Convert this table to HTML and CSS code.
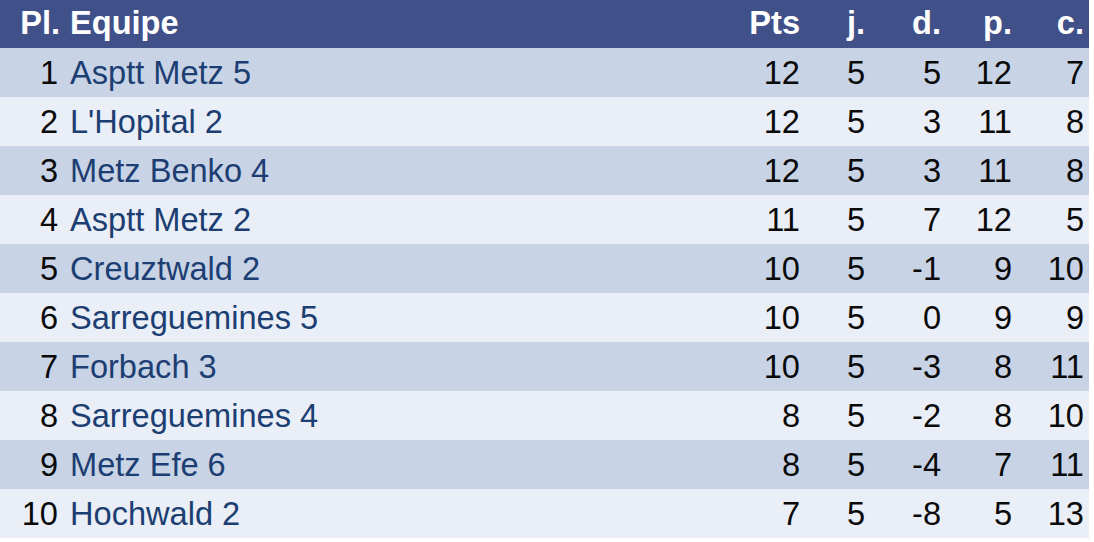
FILE: index.html
```html
<!DOCTYPE html>
<html>
<head>
<meta charset="utf-8">
<link rel="stylesheet" href="styles.css">
</head>
<body>
<table class="standings">
  <colgroup>
    <col class="c-pl"><col class="c-team"><col class="c-pts"><col class="c-j"><col class="c-d"><col class="c-p"><col class="c-c">
  </colgroup>
  <thead>
    <tr><th class="pl">Pl.</th><th class="team">Equipe</th><th>Pts</th><th>j.</th><th>d.</th><th>p.</th><th>c.</th></tr>
  </thead>
  <tbody>
    <tr><td class="pl">1</td><td class="team">Asptt Metz 5</td><td>12</td><td>5</td><td>5</td><td>12</td><td>7</td></tr>
    <tr><td class="pl">2</td><td class="team">L'Hopital 2</td><td>12</td><td>5</td><td>3</td><td>11</td><td>8</td></tr>
    <tr><td class="pl">3</td><td class="team">Metz Benko 4</td><td>12</td><td>5</td><td>3</td><td>11</td><td>8</td></tr>
    <tr><td class="pl">4</td><td class="team">Asptt Metz 2</td><td>11</td><td>5</td><td>7</td><td>12</td><td>5</td></tr>
    <tr><td class="pl">5</td><td class="team">Creuztwald 2</td><td>10</td><td>5</td><td>-1</td><td>9</td><td>10</td></tr>
    <tr><td class="pl">6</td><td class="team">Sarreguemines 5</td><td>10</td><td>5</td><td>0</td><td>9</td><td>9</td></tr>
    <tr><td class="pl">7</td><td class="team">Forbach 3</td><td>10</td><td>5</td><td>-3</td><td>8</td><td>11</td></tr>
    <tr><td class="pl">8</td><td class="team">Sarreguemines 4</td><td>8</td><td>5</td><td>-2</td><td>8</td><td>10</td></tr>
    <tr><td class="pl">9</td><td class="team">Metz Efe 6</td><td>8</td><td>5</td><td>-4</td><td>7</td><td>11</td></tr>
    <tr><td class="pl">10</td><td class="team">Hochwald 2</td><td>7</td><td>5</td><td>-8</td><td>5</td><td>13</td></tr>
  </tbody>
</table>
</body>
</html>
```
FILE: styles.css
```css
html, body {
  margin: 0;
  padding: 0;
  background: #ffffff;
}
.standings {
  border-collapse: collapse;
  table-layout: fixed;
  width: 1089px;
  font-family: "Liberation Sans", Arial, sans-serif;
  font-size: 32.6px;
  color: #0a0a0a;
}
.c-pl { width: 62px; }
.c-team { width: 678px; }
.c-pts { width: 65px; }
.c-j { width: 65px; }
.c-d { width: 76px; }
.c-p { width: 71px; }
.c-c { width: 72px; }
.standings th,
.standings td {
  padding: 0 5px 0 0;
  text-align: right;
  white-space: nowrap;
}
.standings thead tr {
  background: #3f5188;
  height: 48px;
}
.standings th {
  color: #ffffff;
  font-weight: bold;
  vertical-align: middle;
  padding-bottom: 3px;
}
.standings tbody tr {
  height: 49px;
}
.standings tbody tr:nth-child(odd) {
  background: #c8d3e6;
}
.standings tbody tr:nth-child(even) {
  background: #eaeef6;
}
.standings .pl {
  padding-right: 4px;
}
.standings th.pl {
  padding-right: 2px;
}
.standings .team {
  text-align: left;
  padding-left: 8px;
  padding-right: 0;
}
.standings td.team {
  color: #1c3e72;
}
```
